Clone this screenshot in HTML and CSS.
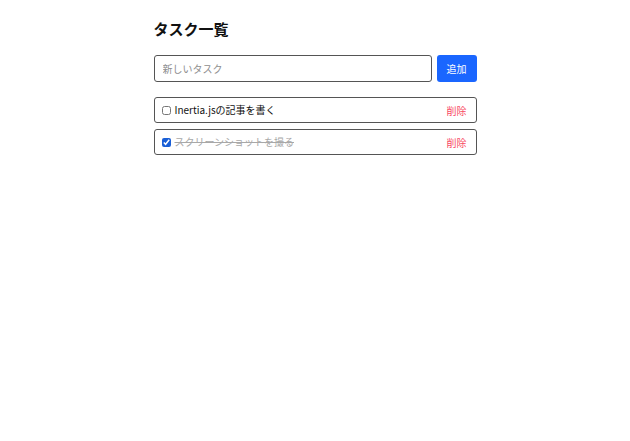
FILE: index.html
```html
<!DOCTYPE html>
<html lang="ja">
<head>
<meta charset="utf-8">
<title>タスク一覧</title>
<link rel="stylesheet" href="styles.css">
</head>
<body>
<div class="container">
  <h1 class="title">タスク一覧</h1>
  <form class="add-form">
    <input class="add-input" type="text" placeholder="新しいタスク">
    <button class="add-button" type="button">追加</button>
  </form>
  <ul class="task-list">
    <li class="task">
      <label class="task-label">
        <input class="task-check" type="checkbox">
        <span class="task-text">Inertia.jsの記事を書く</span>
      </label>
      <button class="task-delete" type="button">削除</button>
    </li>
    <li class="task">
      <label class="task-label">
        <input class="task-check" type="checkbox" checked>
        <span class="task-text done">スクリーンショットを撮る</span>
      </label>
      <button class="task-delete" type="button">削除</button>
    </li>
  </ul>
</div>
</body>
</html>
```

FILE: styles.css
```css
html, body {
  margin: 0;
  padding: 0;
  background: #ffffff;
}
body {
  font-family: "Noto Sans CJK JP", "Noto Sans", sans-serif;
  color: #111111;
  font-size: 10px;
}
.container {
  width: 323px;
  margin: 0 auto;
  padding-top: 18px;
}
.title {
  margin: 0 0 15px 0;
  font-size: 15px;
  line-height: 22px;
  font-weight: 700;
  color: #111;
}
.add-form {
  display: flex;
  gap: 5px;
  margin: 0 0 15px 0;
}
.add-input {
  flex: 1;
  box-sizing: border-box;
  height: 27px;
  margin: 0;
  padding: 0 8px;
  border: 1px solid #555;
  border-radius: 3px;
  font-family: inherit;
  font-size: 10px;
  color: #111;
  outline: none;
}
.add-input::placeholder {
  color: #8e8e8e;
}
.add-button {
  box-sizing: border-box;
  width: 40px;
  height: 27px;
  margin: 0;
  padding: 0;
  border: none;
  border-radius: 3px;
  background: #1a66ff;
  color: #ffffff;
  font-family: inherit;
  font-size: 10px;
}
.task-list {
  list-style: none;
  margin: 0;
  padding: 0;
  display: flex;
  flex-direction: column;
  gap: 6px;
}
.task {
  box-sizing: border-box;
  height: 26px;
  display: flex;
  align-items: center;
  justify-content: space-between;
  padding: 0 9px 0 7px;
  border: 1px solid #555;
  border-radius: 3px;
}
.task-label {
  display: flex;
  align-items: center;
  gap: 4px;
}
.task-check {
  width: 9px;
  height: 9px;
  margin: 0;
  accent-color: #1a5fd6;
}
.task-text {
  font-size: 10px;
  line-height: 14px;
  color: #111;
}
.task-text.done {
  color: #a8a8a8;
  text-decoration: line-through;
}
.task-delete {
  margin: 0;
  padding: 0;
  border: none;
  background: none;
  color: #f84a63;
  font-family: inherit;
  font-size: 10px;
}
```
